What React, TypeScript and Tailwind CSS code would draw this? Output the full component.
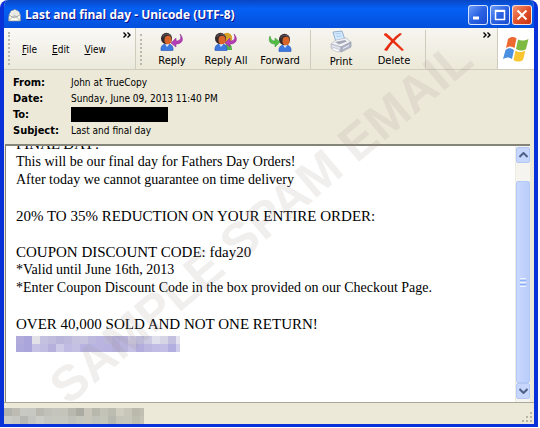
import type { ReactNode } from 'react';

const headers = [
  { label: 'From:', value: 'John at TrueCopy' },
  { label: 'Date:', value: 'Sunday, June 09, 2013 11:40 PM' },
  { label: 'To:', value: '', redacted: true },
  { label: 'Subject:', value: 'Last and final day' },
];

const linkMosaic = [
  ['#b0abdb', '#aaa5da', '#e2e1e8', '#c4c1e0', '#c0bcde', '#b9b5da', '#bdb9dc', '#c5c2e0', '#c7c4e0', '#bdb9de', '#b9b5e0', '#bab7da', '#b3afd8', '#b8b4dc', '#cac8e0', '#bdbad8', '#cccae2', '#e0e0ec', '#d6d5e6', '#c2c0de', '#e3e2ee'],
  ['#aea9dc', '#aaa5da', '#c6c2e6', '#c0bce2', '#b5b0dc', '#cdcae8', '#bfbbe2', '#c4c0e4', '#b7b2e0', '#b8b4e2', '#b9b4e0', '#b7b2e0', '#b5b0da', '#b8b4dc', '#c4c0e3', '#b2addc', '#bbb7e0', '#c0bce6', '#c2bee6', '#b3aee0', '#cfccec'],
];

const statusMosaic = [
  ['#b3b3ad', '#bcbcb5', '#c9c9c4', '#c8c8c2', '#b9b9b1', '#c1c1ba', '#c4c4bc', '#c4c4bb', '#b9b8ae', '#acaba1', '#c8c6ba', '#b9b8ac', '#c4c3b7', '#bdbcb0', '#d0cec1', '#c8c6b9', '#bbb9ac', '#c0beb0'],
  ['#cacbc6', '#c6c7c2', '#b7b8b3', '#c4c5c0', '#cccdc7', '#c5c6bf', '#c6c7bf', '#c6c7be', '#c0c1b8', '#c4c5bb', '#c6c6bb', '#c2c3b8', '#c4c5b9', '#b8b9ae', '#c5c5b9', '#c6c6ba', '#bdbdb0', '#c4c3b6'],
];

function Mosaic({ rows, className }: { rows: string[][]; className: string }) {
  return (
    <div className={`overflow-hidden ${className}`} aria-hidden="true">
      {rows.map((row, y) => (
        <div key={y} className="flex">
          {row.map((color, x) => (
            <span key={x} className="h-2 w-2 shrink-0" style={{ backgroundColor: color }} />
          ))}
        </div>
      ))}
    </div>
  );
}

function Person({ back = false }: { back?: boolean }) {
  return (
    <>
      {back && (
        <>
          <path d="M8 18c0-4 3-6 6-6s4 2 4 6z" fill="#56b84a" />
          <circle cx="13" cy="6" r="5.2" fill="#d7a128" />
        </>
      )}
      <path d="M1 18.500c-.5-4 1.500-6.500 5-6.500h2c3.500 0 5.500 2.500 5 6.500z" fill="#3d78e0" stroke="#2353b5" strokeWidth=".6" />
      <path d="M5 12l2 3 2.500-3z" fill="#dce9ff" />
      <ellipse cx="6.500" cy="6.500" rx="5.500" ry="5.800" fill="#342a2c" />
      <ellipse cx="8" cy="8" rx="3.500" ry="4.300" fill="#d9652b" />
      <path d="M3 5c1-3 5-4 8-1" stroke="#5d5255" strokeWidth="1.200" fill="none" />
    </>
  );
}

function ReplyIcon({ all = false }: { all?: boolean }) {
  return (
    <svg width="24" height="20" viewBox="0 0 24 20">
      <Person back={all} />
      <path d="M20 2c1.500 3.500 1 7-4 7V6l-5 5 5 4v-3c6.500 0 8.500-5 4-10z" fill="#b63fb5" stroke="#8d2592" strokeWidth=".5" />
    </svg>
  );
}

function ForwardIcon() {
  return (
    <svg width="24" height="20" viewBox="0 0 24 20">
      <g transform="translate(10 1)">
        <Person />
      </g>
      <path d="M2 4c-2 5 0 8 5 8v3l5-5-5-4v3C4 9 2.500 7 2 4z" fill="#54bd45" stroke="#2f9130" strokeWidth=".5" />
    </svg>
  );
}

function PrintIcon() {
  return (
    <svg width="24" height="24" viewBox="0 0 24 24">
      <path d="M4 2l9-1 3 9-9 2z" fill="#d6eafe" stroke="#7f9fc7" strokeWidth=".8" />
      <path d="M6.500 4l5-.6M7.500 6.500l5-.6" stroke="#a5cbf2" />
      <path d="M2 14l5-4 10-2 5 4-10 5z" fill="#f3f3f6" stroke="#a4a9b8" strokeWidth=".6" />
      <path d="M6 12l10-2 2 1.500-8 3z" fill="#a3a9b8" />
      <path d="M2 14l10 3v5L2 18z" fill="#dfe1ea" stroke="#a4a9b8" strokeWidth=".6" />
      <path d="M12 17l10-5v5l-10 5z" fill="#b3b8c8" stroke="#8b91a2" strokeWidth=".6" />
      <path d="M4 17.500l7 2.500-2 2-6-2.500z" fill="#fff" stroke="#a4a9b8" strokeWidth=".5" />
      <path d="M14 18.500l6-3" stroke="#eef" />
    </svg>
  );
}

function DeleteIcon() {
  return (
    <svg width="22" height="20" viewBox="0 0 22 20">
      <path d="M1 2l2-1c5 4 11 10 18 17l-2 1C13 13 7 8 1 3z" fill="#ed2f12" />
      <path d="M17 1l2 1C13 7 8 12 4 19l-3-1C6 11 11 5 17 1z" fill="#e52b10" />
    </svg>
  );
}

function ToolButton({ icon, children, className }: { icon: ReactNode; children: ReactNode; className: string }) {
  return (
    <button type="button" className={`flex shrink-0 flex-col items-center ${className}`}>
      <span className="flex h-6 items-center">{icon}</span>
      <span className="whitespace-nowrap leading-4">{children}</span>
    </button>
  );
}

function Chevrons() {
  return (
    <svg width="8" height="6" viewBox="0 0 8 6" fill="none" stroke="#000" strokeWidth="1.400">
      <path d="M.5.5L3 3 .5 5.500M4.500.5L7 3 4.500 5.500" />
    </svg>
  );
}

function Grip() {
  return <span className="my-1 w-0 shrink-0 border-l-2 border-dotted border-[#bbb9ae]" />;
}

function WindowButton({ label, close = false, children }: { label: string; close?: boolean; children: ReactNode }) {
  return (
    <button
      type="button"
      aria-label={label}
      className={`flex h-5 w-5 items-center justify-center rounded-[3px] border border-white/80 bg-linear-to-br ${
        close ? 'from-[#f0926f] via-[#e2512c] to-[#c8320c]' : 'from-[#6b9bf7] via-[#2b62e4] to-[#1a4bd0]'
      }`}
    >
      <svg width="14" height="14" viewBox="0 0 14 14" fill="none" stroke="#fff" strokeWidth="2">
        {children}
      </svg>
    </button>
  );
}

function ScrollButton({ label, d }: { label: string; d: string }) {
  return (
    <button
      type="button"
      aria-label={label}
      className="flex h-4 w-full shrink-0 items-center justify-center rounded-[2px] border border-[#b4c8f5] bg-[#c6d6fc]"
    >
      <svg width="9" height="6" viewBox="0 0 9 6" fill="none" stroke="#4d6185" strokeWidth="2">
        <path d={d} />
      </svg>
    </button>
  );
}

export default function App() {
  return (
    <div className="h-screen bg-white pr-0.5 pb-px font-['DejaVu_Sans_Condensed','DejaVu_Sans',sans-serif] text-[11px] text-black">
      <div className="relative flex h-full flex-col overflow-hidden rounded-t-lg border-x-4 border-b-[3px] border-[#0831d9] bg-[#ece9d8]">
        <header className="-mx-1 flex h-7 shrink-0 items-center bg-linear-to-b from-[#0847c4] via-[#0560f4] via-30% to-[#0450dc] pt-0.5 pr-1.5 pl-2">
          <svg width="13" height="13" viewBox="0 0 13 13" className="mr-1">
            <path d="M1 6l2-4 4-1.500 4 2 1.500 4V12H.5z" fill="#fffdf0" stroke="#8a8e98" strokeWidth=".7" />
            <path d="M3 6l1-3 3-1 3 1 1 3-4 2z" fill="#e7e7e3" />
            <path d="M.5 12l5-5h2l5 5M1 6l5 3 6-3" fill="none" stroke="#92949c" strokeWidth=".8" />
          </svg>
          <h1 className="flex-1 font-['Open_Sans',sans-serif] text-[12px] font-bold whitespace-nowrap text-white [text-shadow:1px_1px_#0f1089]">
            Last and final day - Unicode (UTF-8)
          </h1>
          <div className="flex gap-0.5">
            <WindowButton label="Minimize">
              <path d="M2 10h6" strokeWidth="3" />
            </WindowButton>
            <WindowButton label="Maximize">
              <path d="M2 2.500h10M2.500 2v10M11.500 2v10M2 11.500h10" strokeWidth="1.500" />
              <path d="M2 3h10" />
            </WindowButton>
            <WindowButton label="Close" close>
              <path d="M2.500 2.500l9 9M11.500 2.500l-9 9" />
            </WindowButton>
          </div>
        </header>

        <div className="flex h-[42px] shrink-0 border-b border-[#d0cdbd]">
          <nav className="flex w-[132px] shrink-0 border-r border-[#cfccbe] bg-linear-to-b from-[#f9f9f7] to-[#ece9dc] pl-1">
            <Grip />
            <div className="flex flex-1 items-center gap-[15px] pt-0.5 pl-3 text-[10px]">
              <button type="button"><u>F</u>ile</button>
              <button type="button"><u>E</u>dit</button>
              <button type="button"><u>V</u>iew</button>
            </div>
            <span className="mt-1 mr-1"><Chevrons /></span>
          </nav>
          <div className="flex min-w-0 flex-1 border-r border-[#cfccbe] bg-linear-to-b from-[#f6f5f0] to-[#ece9d8] pt-0.5 pl-1">
            <Grip />
            <ToolButton icon={<ReplyIcon />} className="ml-1 w-[52px]">Reply</ToolButton>
            <ToolButton icon={<ReplyIcon all />} className="w-14">Reply All</ToolButton>
            <ToolButton icon={<ForwardIcon />} className="w-[52px]">Forward</ToolButton>
            <span className="mr-1 ml-1 border-l border-[#cfccbe]" />
            <ToolButton icon={<PrintIcon />} className="w-[52px]">Print</ToolButton>
            <ToolButton icon={<DeleteIcon />} className="w-[54px]">Delete</ToolButton>
            <span className="ml-1 flex-1 border-l border-[#cfccbe]" />
            <span className="mt-0.5 mr-1.5"><Chevrons /></span>
          </div>
          <div className="flex w-9 shrink-0 items-center justify-center bg-white">
            <svg width="28" height="28" viewBox="0 0 28 28">
              <path d="M6 4c3-2.500 6-2.500 8.500-.5l-2 9.500c-3-2-5.500-2-8.500 0z" fill="#ec6a32" />
              <path d="M16 4.500c3 1.500 6 1.500 10.500-.5l-2.500 10c-3 2-6 2-10 0z" fill="#7fbb43" />
              <path d="M3.500 15c3-2.500 5.500-2 8.500 0l-2 9c-3-2-6-2-9 0z" fill="#4a8fe0" />
              <path d="M13.500 15.500c3 2 6 2 10 0l-2.500 9.500c-3 2-6 2-9.500 0z" fill="#f9c632" />
            </svg>
          </div>
        </div>

        <dl className="grid h-[74px] shrink-0 grid-cols-[58px_1fr] content-start pt-[5px] pl-[9px] leading-4">
          {headers.map((h) => (
            <div key={h.label} className="contents">
              <dt className="font-bold">{h.label}</dt>
              <dd className="text-[10px]">
                {h.redacted ? <span className="block h-[15px] w-[97px] bg-black" /> : h.value}
              </dd>
            </div>
          ))}
        </dl>

        <div className="mr-1 ml-px flex min-h-0 flex-1 border-t-2 border-l border-[#858478] bg-white">
          {/* message is scrolled to its end, so the first line is clipped */}
          <main className="flex flex-1 flex-col justify-end overflow-hidden pl-2.5 font-['Liberation_Serif',serif] text-[14px]">
            <div className="pb-[50px] leading-[18px]">
              <p className="text-[15px]">FINAL DAY!</p>
              <p>This will be our final day for Fathers Day Orders!</p>
              <p>After today we cannot guarantee on time delivery</p>
              <br />
              <p className="text-[15px]">20% TO 35% REDUCTION ON YOUR ENTIRE ORDER:</p>
              <br />
              <p className="text-[15px]">COUPON DISCOUNT CODE: fday20</p>
              <p>*Valid until June 16th, 2013</p>
              <p>*Enter Coupon Discount Code in the box provided on our Checkout Page.</p>
              <br />
              <p className="text-[15px]">OVER 40,000 SOLD AND NOT ONE RETURN!</p>
              <div className="pt-[3px]">
                <Mosaic rows={linkMosaic} className="w-[164px]" />
              </div>
            </div>
          </main>
          <div className="flex w-[15px] shrink-0 flex-col border-l border-[#eeede5] bg-[#f5f4ef] pt-px pb-[3px]">
            <ScrollButton label="Scroll up" d="M.5 5l4-4 4 4" />
            <div className="h-[18px] shrink-0" />
            <div className="flex flex-1 flex-col items-center justify-center gap-px rounded-[2px] border border-[#b4c8f5] bg-linear-to-r from-[#c9d8fd] to-[#b9cdfa]">
              <span className="h-px w-1.5 bg-[#eef4fe]" />
              <span className="h-px w-1.5 bg-[#8cb0f8]" />
              <span className="h-px w-1.5 bg-[#eef4fe]" />
              <span className="h-px w-1.5 bg-[#8cb0f8]" />
              <span className="h-px w-1.5 bg-[#eef4fe]" />
            </div>
            <ScrollButton label="Scroll down" d="M.5 1l4 4 4-4" />
          </div>
        </div>

        <footer className="flex h-[22px] shrink-0 items-end justify-between border-t border-[#a9a798]">
          <Mosaic rows={statusMosaic} className="w-[140px]" />
          <svg width="12" height="12" viewBox="0 0 12 12" fill="#b8b4a2">
            <path d="M8 0h2v2H8zM4 4h2v2H4zM8 4h2v2H8zM0 8h2v2H0zM4 8h2v2H4zM8 8h2v2H8z" />
          </svg>
        </footer>

        <div className="pointer-events-none absolute inset-0 flex items-center justify-center pt-5 pr-4">
          <span className="-rotate-40 font-['Liberation_Sans',sans-serif] text-[50px] font-bold whitespace-nowrap text-[#a08c8c]/15">
            SAMPLE SPAM EMAIL
          </span>
        </div>
      </div>
    </div>
  );
}
